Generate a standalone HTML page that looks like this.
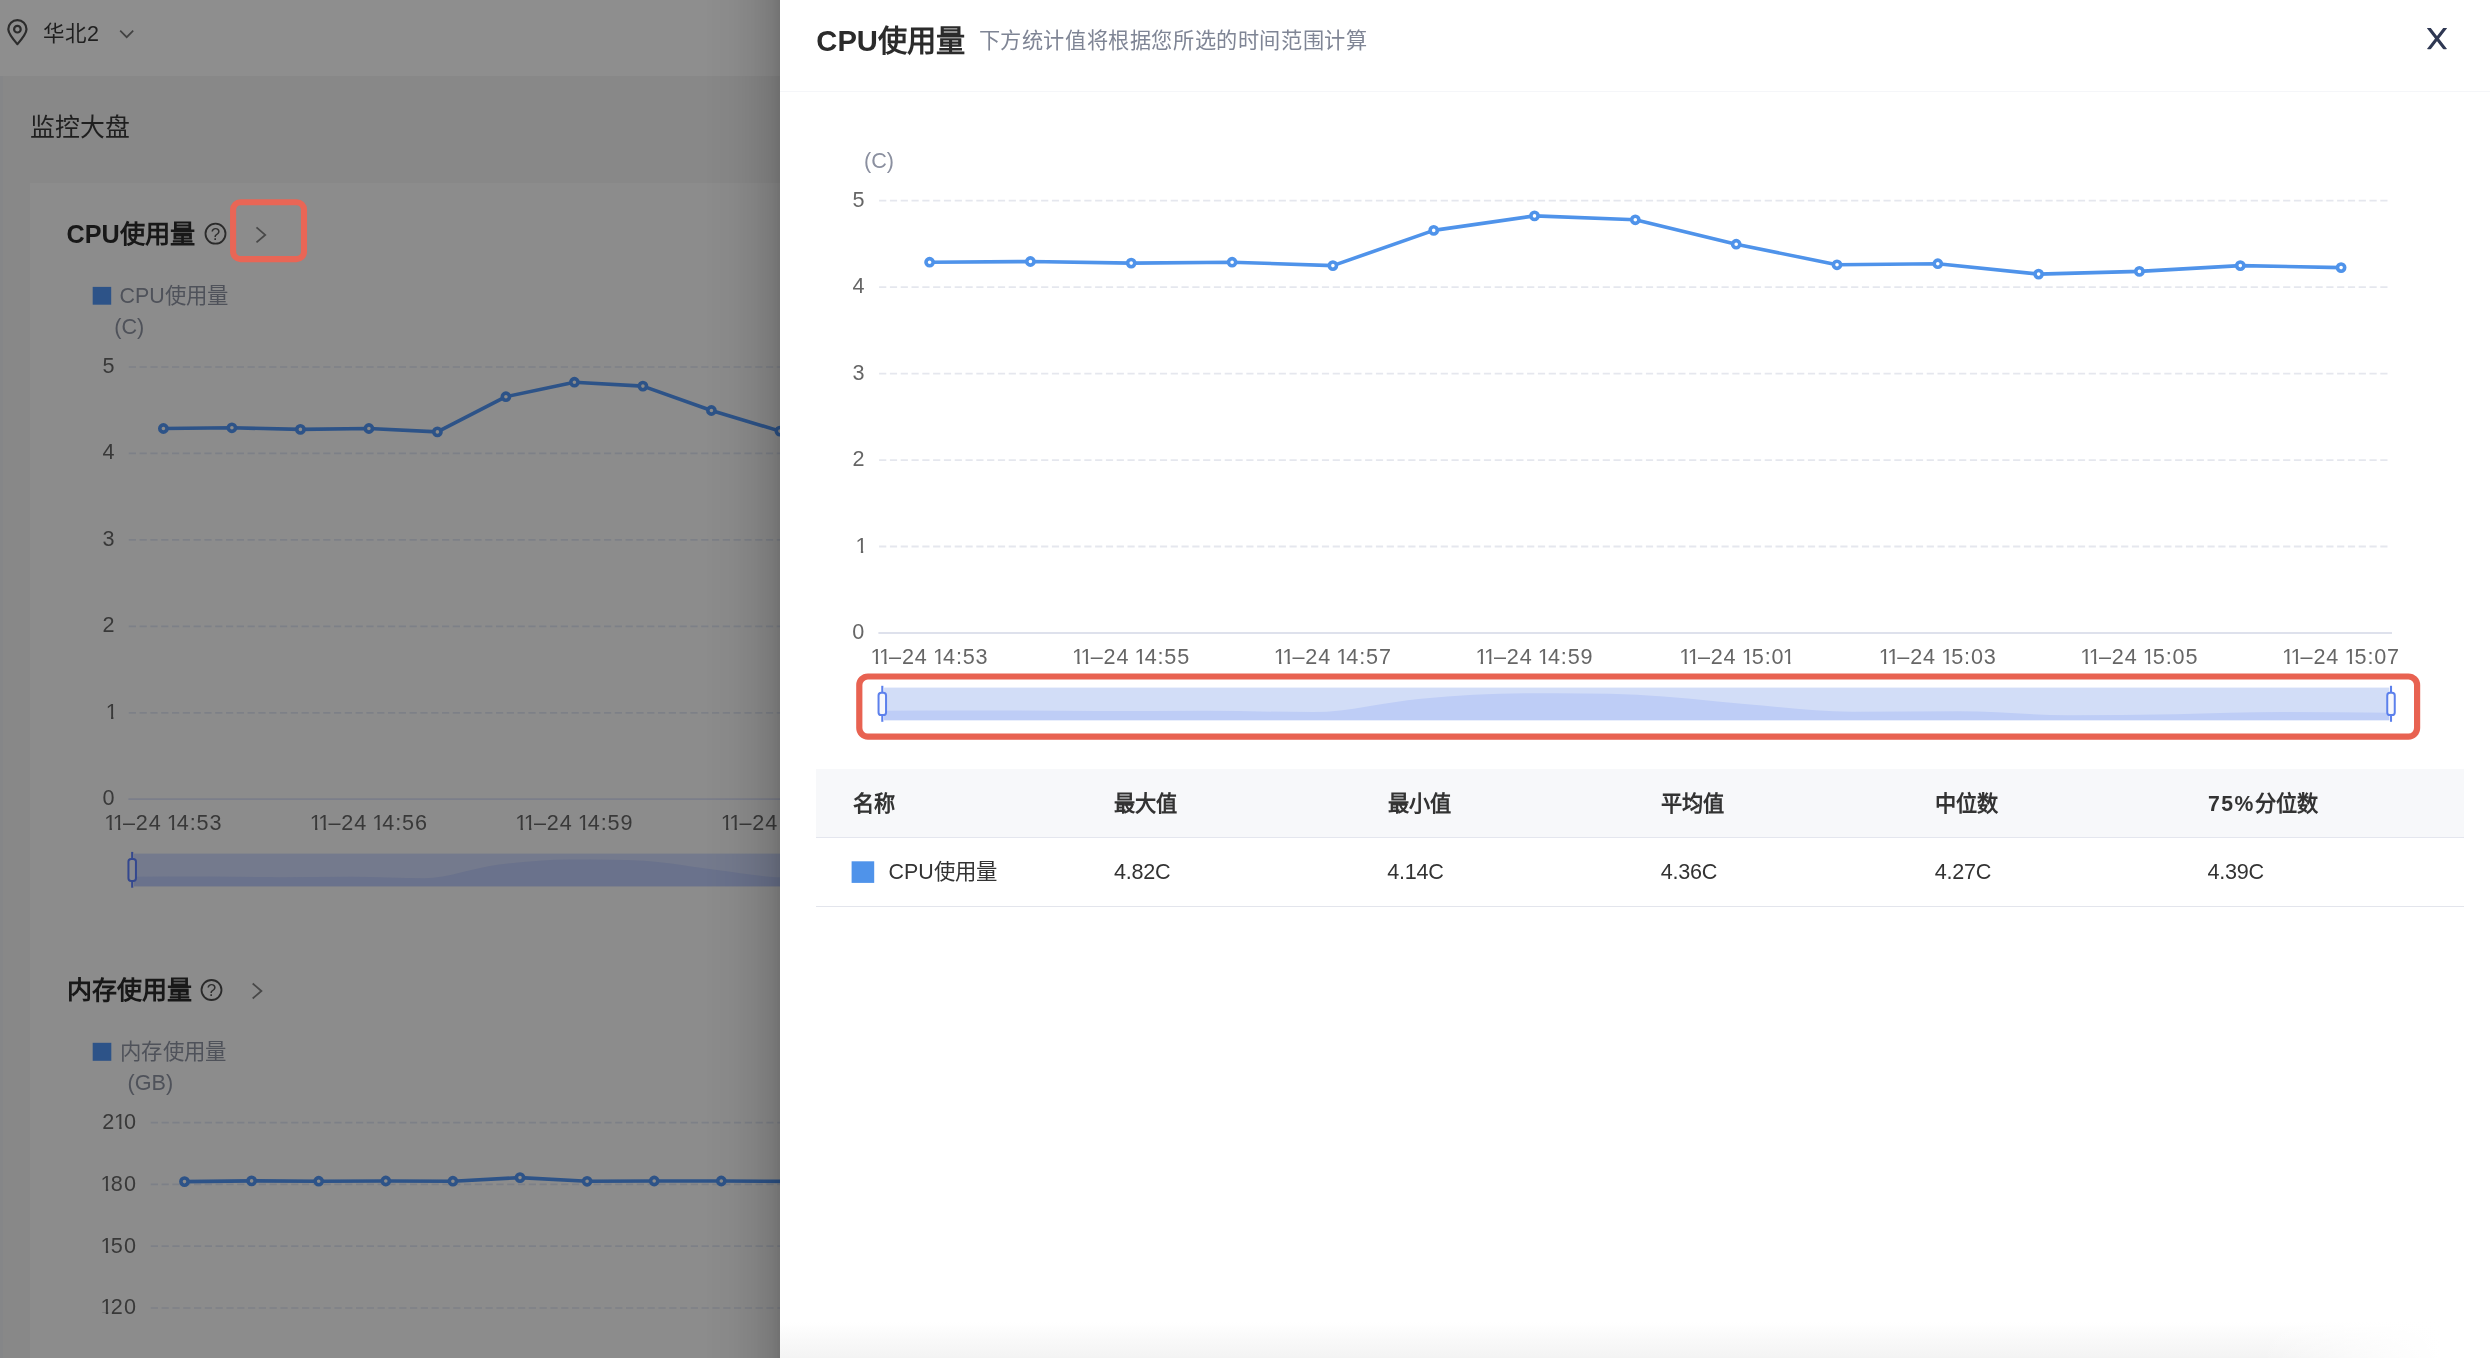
<!DOCTYPE html>
<html lang="zh-CN">
<head>
<meta charset="utf-8">
<title>CPU使用量</title>
<style>
html,body{margin:0;padding:0;}
body{width:2490px;height:1358px;overflow:hidden;background:#ffffff;font-family:"Liberation Sans", sans-serif;}
#page{position:relative;width:2490px;height:1358px;overflow:hidden;background:#888888;}
.t{position:absolute;white-space:nowrap;font-family:"Liberation Sans", sans-serif;}
#left{position:absolute;left:0;top:0;width:790px;height:1358px;overflow:hidden;background:#888888;}
#topbar{position:absolute;left:0;top:0;width:790px;height:76px;background:#8e8e8e;}
#edge{position:absolute;left:0;top:76px;width:2.6px;height:1282px;background:#858688;}
#card{position:absolute;left:30px;top:182.5px;width:760px;height:1180px;background:#8c8c8c;}
#shade{position:absolute;left:705px;top:0;width:75px;height:1358px;background:linear-gradient(to right,rgba(0,0,0,0) 0%,rgba(0,0,0,0.025) 35%,rgba(0,0,0,0.07) 65%,rgba(0,0,0,0.13) 88%,rgba(0,0,0,0.19) 100%);}
#drawer{position:absolute;left:780px;top:0;width:1710px;height:1358px;background:#ffffff;}
#dhead{position:absolute;left:0;top:0;width:1710px;height:90.6px;border-bottom:1.8px solid #f5f6f9;}
#dfoot{position:absolute;left:0;top:1322px;width:1710px;height:36px;background:linear-gradient(to bottom,#ffffff,#f3f3f3);}
#dfade{position:absolute;left:1480px;top:1320px;width:230px;height:38px;background:linear-gradient(to right,rgba(255,255,255,0) 0%,rgba(255,255,255,0.55) 40%,#ffffff 78%);}
#thead{position:absolute;left:36px;top:769.2px;width:1647.5px;height:67.6px;background:#f7f8fa;border-bottom:1.8px solid #e4e6ee;}
#trow{position:absolute;left:36px;top:838.6px;width:1647.5px;height:67px;border-bottom:1.8px solid #e3e5ec;}
svg.ov{position:absolute;left:0;top:0;}
.tl{position:absolute;left:0;top:0;height:1358px;overflow:hidden;will-change:transform;}
.n{display:inline-block;width:8.5px;letter-spacing:0;text-indent:-1.6px;text-align:left;clip-path:polygon(-1px 0,6.3px 0,6.3px 20.9px,6px 20.9px,6px 32px,3.65px 32px,3.65px 20.9px,-1px 20.9px);}
</style>
</head>
<body>
<div id="page">
<div id="left">
<div id="topbar"></div><div id="edge"></div><div id="card"></div>
<svg class="ov" width="790" height="1358" viewBox="0 0 790 1358">
<path d="M17.4 44.2 C12.6 38.6 8.3 33.6 8.3 29.2 a9.1 9.1 0 0 1 18.2 0 C26.5 33.6 22.2 38.6 17.4 44.2 Z" fill="none" stroke="#2c2c2c" stroke-width="2.2" stroke-linejoin="round"/>
<circle cx="17.4" cy="29.2" r="3.3" fill="none" stroke="#2c2c2c" stroke-width="2.2"/>
<path d="M120.2 30.6 L126.7 37.2 L133.2 30.6" fill="none" stroke="#424242" stroke-width="1.7"/>
<circle cx="215.5" cy="233.7" r="10" fill="none" stroke="#2a2a2a" stroke-width="1.8"/>
<rect x="233.1" y="202.2" width="70.9" height="56.9" rx="7.4" ry="7.4" fill="none" stroke="#e96656" stroke-width="6.1"/>
<path d="M256.5 227.4 L265.2 234.9 L256.5 242.4" fill="none" stroke="#484848" stroke-width="1.8"/>
<rect x="92.7" y="286.9" width="18.5" height="17.8" fill="#2d5388"/>
<line x1="128.8" y1="367.0" x2="790" y2="367.0" stroke="#7d8087" stroke-width="1.7" stroke-dasharray="7.2 3.6"/>
<line x1="128.8" y1="453.4" x2="790" y2="453.4" stroke="#7d8087" stroke-width="1.7" stroke-dasharray="7.2 3.6"/>
<line x1="128.8" y1="539.9" x2="790" y2="539.9" stroke="#7d8087" stroke-width="1.7" stroke-dasharray="7.2 3.6"/>
<line x1="128.8" y1="626.4" x2="790" y2="626.4" stroke="#7d8087" stroke-width="1.7" stroke-dasharray="7.2 3.6"/>
<line x1="128.8" y1="712.8" x2="790" y2="712.8" stroke="#7d8087" stroke-width="1.7" stroke-dasharray="7.2 3.6"/>
<line x1="128.4" y1="799.2" x2="790" y2="799.2" stroke="#7b7e8a" stroke-width="1.8"/>
<polyline points="163.4,428.5 231.9,427.8 300.4,429.4 368.9,428.5 437.4,431.9 505.9,396.7 574.4,382.2 642.9,386.1 711.4,410.5 779.9,431.1 848.4,430.0" fill="none" stroke="#2d5388" stroke-width="3.6" stroke-linejoin="round"/>
<circle cx="163.4" cy="428.5" r="3.6" fill="#8c8c8c" stroke="#2d5388" stroke-width="3.6"/>
<circle cx="231.9" cy="427.8" r="3.6" fill="#8c8c8c" stroke="#2d5388" stroke-width="3.6"/>
<circle cx="300.4" cy="429.4" r="3.6" fill="#8c8c8c" stroke="#2d5388" stroke-width="3.6"/>
<circle cx="368.9" cy="428.5" r="3.6" fill="#8c8c8c" stroke="#2d5388" stroke-width="3.6"/>
<circle cx="437.4" cy="431.9" r="3.6" fill="#8c8c8c" stroke="#2d5388" stroke-width="3.6"/>
<circle cx="505.9" cy="396.7" r="3.6" fill="#8c8c8c" stroke="#2d5388" stroke-width="3.6"/>
<circle cx="574.4" cy="382.2" r="3.6" fill="#8c8c8c" stroke="#2d5388" stroke-width="3.6"/>
<circle cx="642.9" cy="386.1" r="3.6" fill="#8c8c8c" stroke="#2d5388" stroke-width="3.6"/>
<circle cx="711.4" cy="410.5" r="3.6" fill="#8c8c8c" stroke="#2d5388" stroke-width="3.6"/>
<circle cx="779.9" cy="431.1" r="3.6" fill="#8c8c8c" stroke="#2d5388" stroke-width="3.6"/>
<circle cx="848.4" cy="430.0" r="3.6" fill="#8c8c8c" stroke="#2d5388" stroke-width="3.6"/>
<rect x="134.0" y="853.6" width="1019.2" height="32.7" fill="#747a8d"/>
<path d="M134.0,876.8 C157.8,876.8 181.5,876.6 205.3,876.6 C229.6,876.6 254.0,877.2 278.3,877.2 C302.7,877.2 327.0,876.8 351.4,876.8 C375.7,876.8 400.1,878.2 424.4,878.2 C448.8,878.2 473.1,867.9 497.5,864.8 C521.8,861.7 546.2,859.4 570.5,859.4 C594.9,859.4 619.2,859.4 643.6,860.8 C668.0,862.3 692.3,867.2 716.7,870.0 C741.0,872.9 765.4,877.8 789.7,877.8 C814.1,877.8 838.4,877.4 862.8,877.4 C887.1,877.4 911.5,881.4 935.8,881.4 C960.2,881.4 984.5,880.9 1008.9,880.3 C1033.2,879.8 1057.6,878.2 1081.9,878.2 C1105.7,878.2 1129.4,878.7 1153.2,878.9 L1153.2,886.3 L134.0,886.3 Z" fill="#6a728c"/>
<line x1="132.2" y1="851.9" x2="132.2" y2="887.7" stroke="#34488f" stroke-width="2.1"/>
<rect x="128.45" y="858.9" width="7.5" height="22.1" rx="2.7" fill="#888a90" stroke="#34488f" stroke-width="2"/>
<circle cx="211.5" cy="990" r="10" fill="none" stroke="#2a2a2a" stroke-width="1.8"/>
<path d="M252.7 983.5 L261.4 991 L252.7 998.5" fill="none" stroke="#484848" stroke-width="1.8"/>
<rect x="92.7" y="1042.8" width="18.6" height="18" fill="#2d5388"/>
<line x1="150.8" y1="1122.6" x2="790" y2="1122.6" stroke="#7d8087" stroke-width="1.7" stroke-dasharray="7.2 3.6"/>
<line x1="150.8" y1="1184.4" x2="790" y2="1184.4" stroke="#7d8087" stroke-width="1.7" stroke-dasharray="7.2 3.6"/>
<line x1="150.8" y1="1246.2" x2="790" y2="1246.2" stroke="#7d8087" stroke-width="1.7" stroke-dasharray="7.2 3.6"/>
<line x1="150.8" y1="1308.0" x2="790" y2="1308.0" stroke="#7d8087" stroke-width="1.7" stroke-dasharray="7.2 3.6"/>
<polyline points="184.5,1181.6 251.6,1180.9 318.7,1181.2 385.8,1181.0 452.9,1181.2 520.0,1177.6 587.1,1181.3 654.2,1181.0 721.3,1181.0 788.4,1181.4 855.5,1181.4" fill="none" stroke="#2d5388" stroke-width="3.6" stroke-linejoin="round"/>
<circle cx="184.5" cy="1181.6" r="3.6" fill="#8c8c8c" stroke="#2d5388" stroke-width="3.6"/>
<circle cx="251.6" cy="1180.9" r="3.6" fill="#8c8c8c" stroke="#2d5388" stroke-width="3.6"/>
<circle cx="318.7" cy="1181.2" r="3.6" fill="#8c8c8c" stroke="#2d5388" stroke-width="3.6"/>
<circle cx="385.8" cy="1181.0" r="3.6" fill="#8c8c8c" stroke="#2d5388" stroke-width="3.6"/>
<circle cx="452.9" cy="1181.2" r="3.6" fill="#8c8c8c" stroke="#2d5388" stroke-width="3.6"/>
<circle cx="520.0" cy="1177.6" r="3.6" fill="#8c8c8c" stroke="#2d5388" stroke-width="3.6"/>
<circle cx="587.1" cy="1181.3" r="3.6" fill="#8c8c8c" stroke="#2d5388" stroke-width="3.6"/>
<circle cx="654.2" cy="1181.0" r="3.6" fill="#8c8c8c" stroke="#2d5388" stroke-width="3.6"/>
<circle cx="721.3" cy="1181.0" r="3.6" fill="#8c8c8c" stroke="#2d5388" stroke-width="3.6"/>
<circle cx="788.4" cy="1181.4" r="3.6" fill="#8c8c8c" stroke="#2d5388" stroke-width="3.6"/>
<circle cx="855.5" cy="1181.4" r="3.6" fill="#8c8c8c" stroke="#2d5388" stroke-width="3.6"/>
</svg>
<div class="tl" style="width:790px">
<div class="t" style="top:17.6px;font-size:21.5px;line-height:32px;color:#1f1f1f;left:43.0px;">华北2</div>
<div class="t" style="top:109.1px;font-size:24.9px;line-height:37px;color:#1f1f1f;left:30.2px;">监控大盘</div>
<div class="t" style="top:215.0px;font-size:25.2px;line-height:38px;color:#181818;font-weight:700;left:66.5px;">CPU使用量</div>
<div class="t" style="top:221.7px;font-size:17px;line-height:26px;color:#2e2e2e;left:115.5px;width:200px;text-align:center;">?</div>
<div class="t" style="top:280.0px;font-size:21.4px;line-height:32px;color:#4f525a;left:119.6px;">CPU使用量</div>
<div class="t" style="top:310.6px;font-size:21.6px;line-height:32px;color:#4f525a;left:114.2px;">(C)</div>
<div class="t" style="top:350.0px;font-size:21.6px;line-height:32px;color:#393939;left:8.5px;width:200px;text-align:center;">5</div>
<div class="t" style="top:436.4px;font-size:21.6px;line-height:32px;color:#393939;left:8.5px;width:200px;text-align:center;">4</div>
<div class="t" style="top:522.9px;font-size:21.6px;line-height:32px;color:#393939;left:8.5px;width:200px;text-align:center;">3</div>
<div class="t" style="top:609.4px;font-size:21.6px;line-height:32px;color:#393939;left:8.5px;width:200px;text-align:center;">2</div>
<div class="t" style="top:695.8px;font-size:21.6px;line-height:32px;color:#393939;left:107.4px;"><span class="n">1</span></div>
<div class="t" style="top:782.0px;font-size:21.6px;line-height:32px;color:#393939;left:8.5px;width:200px;text-align:center;">0</div>
<div class="t" style="top:807.0px;font-size:21.6px;line-height:32px;color:#393939;letter-spacing:0.85px;left:64.1px;width:200px;text-align:center;"><span class="n">1</span><span class="n">1</span>–24 <span class="n">1</span>4:53</div>
<div class="t" style="top:807.0px;font-size:21.6px;line-height:32px;color:#393939;letter-spacing:0.85px;left:269.6px;width:200px;text-align:center;"><span class="n">1</span><span class="n">1</span>–24 <span class="n">1</span>4:56</div>
<div class="t" style="top:807.0px;font-size:21.6px;line-height:32px;color:#393939;letter-spacing:0.85px;left:475.1px;width:200px;text-align:center;"><span class="n">1</span><span class="n">1</span>–24 <span class="n">1</span>4:59</div>
<div class="t" style="top:807.0px;font-size:21.6px;line-height:32px;color:#393939;letter-spacing:0.85px;left:680.6px;width:200px;text-align:center;"><span class="n">1</span><span class="n">1</span>–24 <span class="n">1</span>5:02</div>
<div class="t" style="top:971.4px;font-size:25px;line-height:38px;color:#181818;font-weight:700;left:66.5px;">内存使用量</div>
<div class="t" style="top:978.0px;font-size:17px;line-height:26px;color:#2e2e2e;left:111.5px;width:200px;text-align:center;">?</div>
<div class="t" style="top:1035.8px;font-size:21.4px;line-height:32px;color:#4f525a;letter-spacing:0.4px;left:119.9px;">内存使用量</div>
<div class="t" style="top:1067.4px;font-size:21.6px;line-height:32px;color:#4f525a;left:127.6px;">(GB)</div>
<div class="t" style="top:1105.9px;font-size:21.6px;line-height:32px;color:#393939;letter-spacing:1.4px;left:102.2px;">2<span class="n">1</span>0</div>
<div class="t" style="top:1167.7px;font-size:21.6px;line-height:32px;color:#393939;letter-spacing:1.4px;left:102.2px;"><span class="n">1</span>80</div>
<div class="t" style="top:1229.5px;font-size:21.6px;line-height:32px;color:#393939;letter-spacing:1.4px;left:102.2px;"><span class="n">1</span>50</div>
<div class="t" style="top:1291.3px;font-size:21.6px;line-height:32px;color:#393939;letter-spacing:1.4px;left:102.2px;"><span class="n">1</span>20</div>
</div>
<div id="shade"></div>
</div>
<div id="drawer"><div id="dhead"></div><div id="thead"></div><div id="trow"></div><div id="dfoot"></div><div id="dfade"></div></div>
<svg class="ov" width="2490" height="1358" viewBox="0 0 2490 1358">
<defs><clipPath id="cx"><rect x="2420" y="28" width="34" height="21.2"/></clipPath></defs>
<g clip-path="url(#cx)"><path d="M2428.2 27.2 L2445.8 50 M2445.8 27.2 L2428.2 50" fill="none" stroke="#2f3853" stroke-width="3.1"/></g>
<line x1="879.1" y1="200.7" x2="2389" y2="200.7" stroke="#e5e7ee" stroke-width="1.8" stroke-dasharray="7.2 3.6"/>
<line x1="879.1" y1="287.1" x2="2389" y2="287.1" stroke="#e5e7ee" stroke-width="1.8" stroke-dasharray="7.2 3.6"/>
<line x1="879.1" y1="373.6" x2="2389" y2="373.6" stroke="#e5e7ee" stroke-width="1.8" stroke-dasharray="7.2 3.6"/>
<line x1="879.1" y1="460.1" x2="2389" y2="460.1" stroke="#e5e7ee" stroke-width="1.8" stroke-dasharray="7.2 3.6"/>
<line x1="879.1" y1="546.5" x2="2389" y2="546.5" stroke="#e5e7ee" stroke-width="1.8" stroke-dasharray="7.2 3.6"/>
<line x1="878.4" y1="633.0" x2="2392" y2="633.0" stroke="#dee1ec" stroke-width="1.8"/>
<polyline points="929.6,262.2 1030.4,261.5 1131.2,263.1 1232.1,262.2 1332.9,265.6 1433.7,230.4 1534.5,215.9 1635.3,219.8 1736.2,244.2 1837.0,264.8 1937.8,263.7 2038.6,274.1 2139.4,271.4 2240.3,265.6 2341.1,267.6" fill="none" stroke="#4f93ea" stroke-width="3.6" stroke-linejoin="round"/>
<circle cx="929.6" cy="262.2" r="3.6" fill="#fff" stroke="#4f93ea" stroke-width="3.6"/>
<circle cx="1030.4" cy="261.5" r="3.6" fill="#fff" stroke="#4f93ea" stroke-width="3.6"/>
<circle cx="1131.2" cy="263.1" r="3.6" fill="#fff" stroke="#4f93ea" stroke-width="3.6"/>
<circle cx="1232.1" cy="262.2" r="3.6" fill="#fff" stroke="#4f93ea" stroke-width="3.6"/>
<circle cx="1332.9" cy="265.6" r="3.6" fill="#fff" stroke="#4f93ea" stroke-width="3.6"/>
<circle cx="1433.7" cy="230.4" r="3.6" fill="#fff" stroke="#4f93ea" stroke-width="3.6"/>
<circle cx="1534.5" cy="215.9" r="3.6" fill="#fff" stroke="#4f93ea" stroke-width="3.6"/>
<circle cx="1635.3" cy="219.8" r="3.6" fill="#fff" stroke="#4f93ea" stroke-width="3.6"/>
<circle cx="1736.2" cy="244.2" r="3.6" fill="#fff" stroke="#4f93ea" stroke-width="3.6"/>
<circle cx="1837.0" cy="264.8" r="3.6" fill="#fff" stroke="#4f93ea" stroke-width="3.6"/>
<circle cx="1937.8" cy="263.7" r="3.6" fill="#fff" stroke="#4f93ea" stroke-width="3.6"/>
<circle cx="2038.6" cy="274.1" r="3.6" fill="#fff" stroke="#4f93ea" stroke-width="3.6"/>
<circle cx="2139.4" cy="271.4" r="3.6" fill="#fff" stroke="#4f93ea" stroke-width="3.6"/>
<circle cx="2240.3" cy="265.6" r="3.6" fill="#fff" stroke="#4f93ea" stroke-width="3.6"/>
<circle cx="2341.1" cy="267.6" r="3.6" fill="#fff" stroke="#4f93ea" stroke-width="3.6"/>
<rect x="884.1" y="687.6" width="1505.1" height="32.6" fill="#d2ddf7"/>
<path d="M884.1,710.7 C919.4,710.7 954.7,710.5 990.1,710.5 C1026.0,710.5 1061.9,711.1 1097.8,711.1 C1133.8,711.1 1169.7,710.7 1205.6,710.7 C1241.5,710.7 1277.4,712.1 1313.4,712.1 C1349.3,712.1 1385.2,701.8 1421.1,698.7 C1457.0,695.6 1493.0,693.3 1528.9,693.3 C1564.8,693.3 1600.7,693.3 1636.7,694.7 C1672.6,696.2 1708.5,701.1 1744.4,703.9 C1780.3,706.8 1816.3,711.7 1852.2,711.7 C1888.1,711.7 1924.0,711.3 1959.9,711.3 C1995.9,711.3 2031.8,715.3 2067.7,715.3 C2103.6,715.3 2139.5,714.8 2175.5,714.2 C2211.4,713.7 2247.3,712.1 2283.2,712.1 C2318.6,712.1 2353.9,712.6 2389.2,712.8 L2389.2,720.2 L884.1,720.2 Z" fill="#becdf6"/>
<line x1="882.3" y1="685.8" x2="882.3" y2="721.8" stroke="#5c80ec" stroke-width="2.1"/>
<rect x="878.55" y="692.8" width="7.5" height="22.3" rx="2.7" fill="#f7f8fc" stroke="#5c80ec" stroke-width="2"/>
<line x1="2391.0" y1="685.8" x2="2391.0" y2="721.8" stroke="#5c80ec" stroke-width="2.1"/>
<rect x="2387.25" y="692.8" width="7.5" height="22.3" rx="2.7" fill="#f7f8fc" stroke="#5c80ec" stroke-width="2"/>
<rect x="859.3" y="676.5" width="1557.8" height="60.1" rx="8.6" ry="8.6" fill="none" stroke="#e86251" stroke-width="6.2"/>
<rect x="851.6" y="861.3" width="22.6" height="21.6" fill="#4f93ea"/>
</svg>
<div class="tl" style="width:2490px">
<div class="t" style="top:18.5px;font-size:29.2px;line-height:44px;color:#2b2b2b;font-weight:700;left:816.3px;">CPU使用量</div>
<div class="t" style="top:25.1px;font-size:21.2px;line-height:32px;color:#7f8595;letter-spacing:0.6px;left:978.6px;">下方统计值将根据您所选的时间范围计算</div>
<div class="t" style="top:145.0px;font-size:21.6px;line-height:32px;color:#8b90a0;left:864.0px;">(C)</div>
<div class="t" style="top:183.7px;font-size:21.6px;line-height:32px;color:#666666;left:758.4px;width:200px;text-align:center;">5</div>
<div class="t" style="top:270.1px;font-size:21.6px;line-height:32px;color:#666666;left:758.4px;width:200px;text-align:center;">4</div>
<div class="t" style="top:356.6px;font-size:21.6px;line-height:32px;color:#666666;left:758.4px;width:200px;text-align:center;">3</div>
<div class="t" style="top:443.1px;font-size:21.6px;line-height:32px;color:#666666;left:758.4px;width:200px;text-align:center;">2</div>
<div class="t" style="top:529.5px;font-size:21.6px;line-height:32px;color:#666666;left:857.2px;"><span class="n">1</span></div>
<div class="t" style="top:615.7px;font-size:21.6px;line-height:32px;color:#666666;left:758.2px;width:200px;text-align:center;">0</div>
<div class="t" style="top:641.0px;font-size:21.6px;line-height:32px;color:#666666;letter-spacing:0.85px;left:830.3px;width:200px;text-align:center;"><span class="n">1</span><span class="n">1</span>–24 <span class="n">1</span>4:53</div>
<div class="t" style="top:641.0px;font-size:21.6px;line-height:32px;color:#666666;letter-spacing:0.85px;left:1031.9px;width:200px;text-align:center;"><span class="n">1</span><span class="n">1</span>–24 <span class="n">1</span>4:55</div>
<div class="t" style="top:641.0px;font-size:21.6px;line-height:32px;color:#666666;letter-spacing:0.85px;left:1233.6px;width:200px;text-align:center;"><span class="n">1</span><span class="n">1</span>–24 <span class="n">1</span>4:57</div>
<div class="t" style="top:641.0px;font-size:21.6px;line-height:32px;color:#666666;letter-spacing:0.85px;left:1435.2px;width:200px;text-align:center;"><span class="n">1</span><span class="n">1</span>–24 <span class="n">1</span>4:59</div>
<div class="t" style="top:641.0px;font-size:21.6px;line-height:32px;color:#666666;letter-spacing:0.85px;left:1636.9px;width:200px;text-align:center;"><span class="n">1</span><span class="n">1</span>–24 <span class="n">1</span>5:0<span class="n">1</span></div>
<div class="t" style="top:641.0px;font-size:21.6px;line-height:32px;color:#666666;letter-spacing:0.85px;left:1838.5px;width:200px;text-align:center;"><span class="n">1</span><span class="n">1</span>–24 <span class="n">1</span>5:03</div>
<div class="t" style="top:641.0px;font-size:21.6px;line-height:32px;color:#666666;letter-spacing:0.85px;left:2040.1px;width:200px;text-align:center;"><span class="n">1</span><span class="n">1</span>–24 <span class="n">1</span>5:05</div>
<div class="t" style="top:641.0px;font-size:21.6px;line-height:32px;color:#666666;letter-spacing:0.85px;left:2241.8px;width:200px;text-align:center;"><span class="n">1</span><span class="n">1</span>–24 <span class="n">1</span>5:07</div>
<div class="t" style="top:788.0px;font-size:21.2px;line-height:32px;color:#333333;font-weight:700;left:853.3px;">名称</div>
<div class="t" style="top:788.0px;font-size:21.2px;line-height:32px;color:#333333;font-weight:700;left:1114.4px;">最大值</div>
<div class="t" style="top:788.0px;font-size:21.2px;line-height:32px;color:#333333;font-weight:700;left:1387.8px;">最小值</div>
<div class="t" style="top:788.0px;font-size:21.2px;line-height:32px;color:#333333;font-weight:700;left:1661.3px;">平均值</div>
<div class="t" style="top:788.0px;font-size:21.2px;line-height:32px;color:#333333;font-weight:700;left:1935.2px;">中位数</div>
<div class="t" style="top:788.0px;font-size:21.2px;line-height:32px;color:#333333;font-weight:700;left:2207.9px;"><span style="letter-spacing:1.5px">75%</span>分位数</div>
<div class="t" style="top:856.3px;font-size:21.4px;line-height:32px;color:#333333;left:888.5px;">CPU使用量</div>
<div class="t" style="top:856.3px;font-size:21.6px;line-height:32px;color:#333333;letter-spacing:-0.25px;left:1113.9px;">4.82C</div>
<div class="t" style="top:856.3px;font-size:21.6px;line-height:32px;color:#333333;letter-spacing:-0.25px;left:1387.3px;">4.14C</div>
<div class="t" style="top:856.3px;font-size:21.6px;line-height:32px;color:#333333;letter-spacing:-0.25px;left:1660.8px;">4.36C</div>
<div class="t" style="top:856.3px;font-size:21.6px;line-height:32px;color:#333333;letter-spacing:-0.25px;left:1934.7px;">4.27C</div>
<div class="t" style="top:856.3px;font-size:21.6px;line-height:32px;color:#333333;letter-spacing:-0.25px;left:2207.4px;">4.39C</div>
</div>
</div>
</body>
</html>
